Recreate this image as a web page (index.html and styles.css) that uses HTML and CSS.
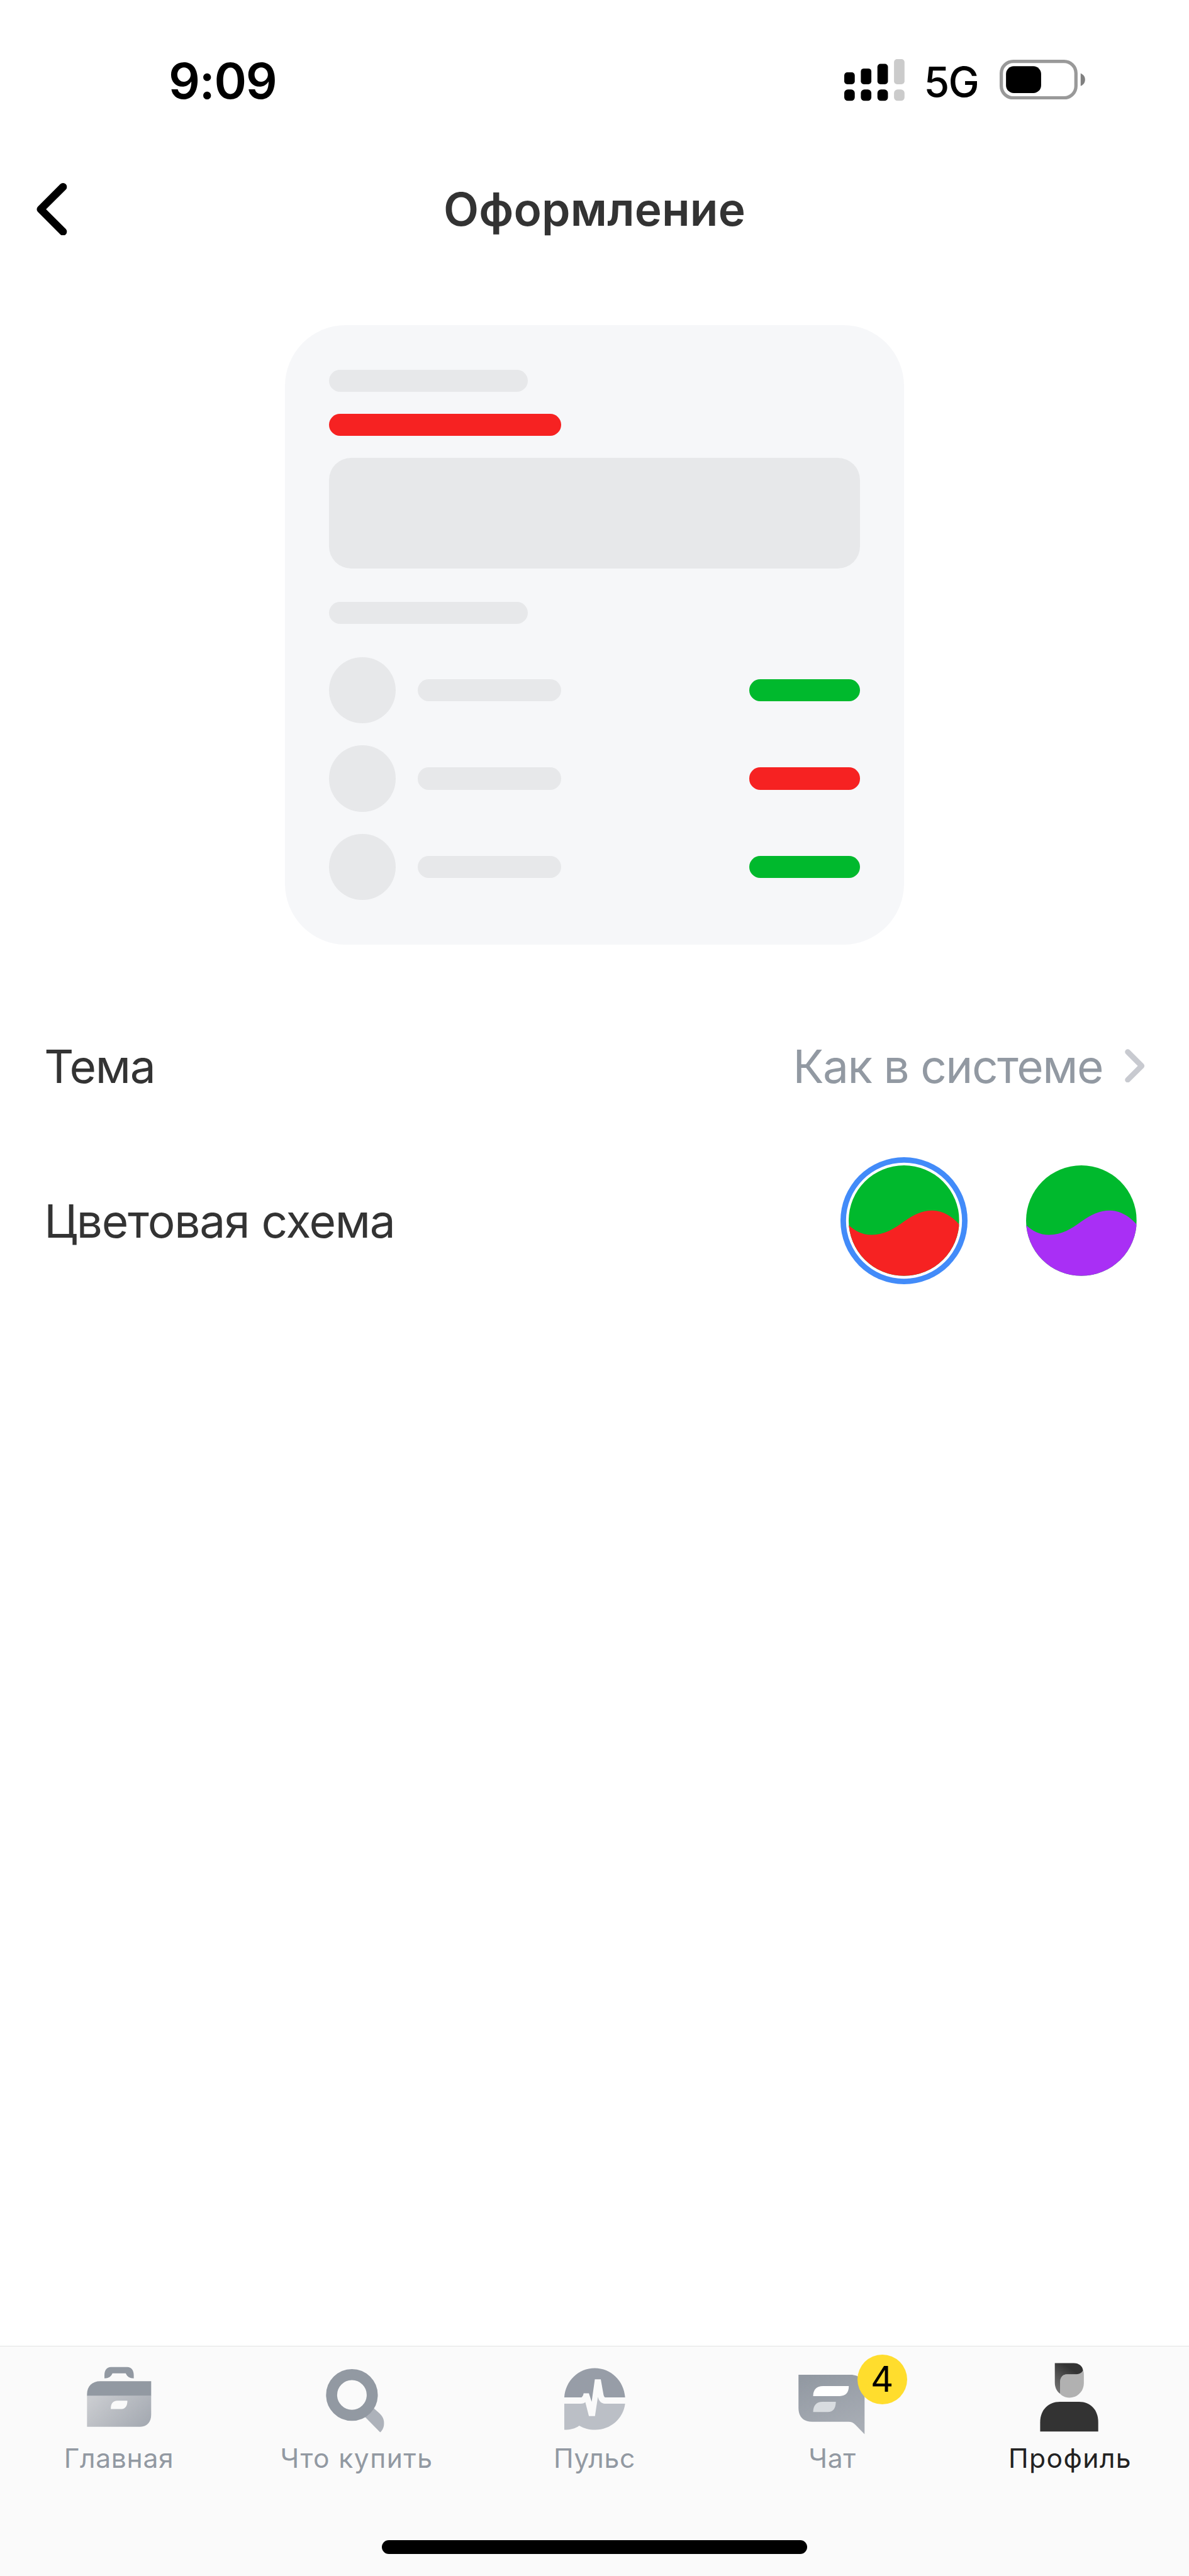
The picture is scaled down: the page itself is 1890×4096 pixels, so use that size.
FILE: index.html
```html
<!DOCTYPE html>
<html lang="ru">
<head>
    <meta charset="UTF-8">
    <meta name="viewport" content="width=device-width, initial-scale=1.0">
    <title>Оформление</title>
    <link rel="stylesheet" href="styles.css">
</head>
<body>
    <div class="screen">
        <div class="status-bar">
            <span class="time">9:09</span>
            <div class="status-icons">
                <svg class="signal" viewBox="0 0 21.8 15.3">
                    <rect x="0" y="4.8" width="3.8" height="4.3" rx="1.1"/>
                    <rect x="6" y="3.4" width="3.8" height="5.7" rx="1.1"/>
                    <rect x="12" y="1.7" width="3.8" height="7.4" rx="1.1"/>
                    <rect x="18" y="0" width="3.8" height="9.1" rx="1.1" fill="#cbcbcb"/>
                    <rect x="0" y="11" width="3.8" height="4.1" rx="1.3"/>
                    <rect x="6" y="11" width="3.8" height="4.1" rx="1.3"/>
                    <rect x="12" y="11" width="3.8" height="4.1" rx="1.3"/>
                    <rect x="18" y="11" width="3.8" height="4.1" rx="1.3" fill="#cbcbcb"/>
                </svg>
                <span class="network">5G</span>
                <svg class="battery" viewBox="0 0 31 14.4">
                    <rect x="0.6" y="0.6" width="27" height="13.2" rx="4.3" fill="none" stroke="#999" stroke-width="1.2"/>
                    <rect x="2.3" y="2.35" width="12.7" height="9.7" rx="2.8"/>
                    <path d="M29.3 4.9 C30.4 5.4 30.9 6.2 30.9 7.2 C30.9 8.2 30.4 9 29.3 9.5 Z" fill="#808080"/>
                </svg>
            </div>
        </div>

        <header class="nav-bar">
            <svg class="back" viewBox="0 0 11 19">
                <path d="M9.6 1.4 L1.5 9.5 L9.6 17.6" fill="none" stroke="#000" stroke-width="2.8" stroke-linecap="round" stroke-linejoin="round"/>
            </svg>
            <h1>Оформление</h1>
        </header>

        <main>
            <div class="preview">
                <div class="bar short"></div>
                <div class="bar long red"></div>
                <div class="box"></div>
                <div class="bar short"></div>
                <div class="list">
                    <div class="item"><i class="dot"></i><i class="bar name"></i><i class="bar value green"></i></div>
                    <div class="item"><i class="dot"></i><i class="bar name"></i><i class="bar value red"></i></div>
                    <div class="item"><i class="dot"></i><i class="bar name"></i><i class="bar value green"></i></div>
                </div>
            </div>

            <div class="row theme">
                <span class="label">Тема</span>
                <span class="current">Как в системе</span>
                <svg class="chevron" viewBox="0 0 7.2 12.2">
                    <path d="M1.05 1.05 L6.1 6.1 L1.05 11.15" fill="none" stroke="#c8cad0" stroke-width="2" stroke-linecap="round" stroke-linejoin="round"/>
                </svg>
            </div>

            <div class="row scheme">
                <span class="label">Цветовая схема</span>
                <div class="swatches">
                    <div class="swatch selected">
                        <svg viewBox="0 0 40 40">
                            <clipPath id="round"><circle cx="20" cy="20" r="20"/></clipPath>
                            <g clip-path="url(#round)">
                                <rect width="40" height="40" fill="#00b92d"/>
                                <path d="M0 21.6 C2.2 23.7 5 25.15 8.3 25.15 C13 25.15 16.4 22.9 20 20.3 C23.5 17.8 26.5 16.3 30.3 16.3 C34 16.3 37.6 18.5 40 21.4 V40 H0 Z" fill="#f62222"/>
                            </g>
                        </svg>
                    </div>
                    <div class="swatch">
                        <svg viewBox="0 0 40 40">
                            <g clip-path="url(#round)">
                                <rect width="40" height="40" fill="#00b92d"/>
                                <path d="M0 21.6 C2.2 23.7 5 25.15 8.3 25.15 C13 25.15 16.4 22.9 20 20.3 C23.5 17.8 26.5 16.3 30.3 16.3 C34 16.3 37.6 18.5 40 21.4 V40 H0 Z" fill="#a92ff5"/>
                            </g>
                        </svg>
                    </div>
                </div>
            </div>
        </main>

        <nav class="tab-bar">
            <div class="tabs">
                <div class="tab">
                    <svg viewBox="0 0 32 32">
                        <linearGradient id="case" x1="0" y1="0.2" x2="1" y2="0.7">
                            <stop offset="0" stop-color="#caccd0"/>
                            <stop offset="1" stop-color="#a6abb3"/>
                        </linearGradient>
                        <path d="M10.7 9.5 V8.3 C10.7 6.5 11.6 5.4 13 5.4 H19 C20.4 5.4 21.3 6.5 21.3 8.3 V9.5 C19.8 9.5 18.9 8.9 18.4 7.7 H13.6 C13.1 8.9 12.2 9.5 10.7 9.5 Z" fill="#9299a2"/>
                        <path d="M4.4 15.85 V15.2 C4.4 12.3 6.3 10.5 9.2 10.5 H27.6 V15.85 Z" fill="#9299a2"/>
                        <path fill-rule="evenodd" d="M4.4 15.8 H27.6 V22.6 C27.6 25.3 26.2 27 23.7 27 H4.4 Z M13 20.6 H16.9 C18.3 20.6 19 19.4 19 17.6 H15.4 C13.7 17.6 13 18.7 13 20.6 Z" fill="url(#case)"/>
                    </svg>
                    <span>Главная</span>
                </div>
                <div class="tab">
                    <svg viewBox="0 0 32 32">
                        <path d="M22.1 20.3 L24.2 22.2 C25.4 23.4 25.8 24.4 25.8 25.8 C25.8 27.2 25.2 28.4 24.4 29 L18.8 23.3 Z" fill="#adb2ba"/>
                        <circle cx="14.2" cy="15.5" r="7.35" fill="#fafafa" stroke="#9299a2" stroke-width="4"/>
                    </svg>
                    <span class="wide">Что купить</span>
                </div>
                <div class="tab">
                    <svg viewBox="0 0 32 32">
                        <path d="M5 16.4 C5.4 10.4 10.1 5.8 16 5.8 C21.9 5.8 26.6 10.4 27 16.4 H19.7 C19.3 16 19.2 15.6 19.1 14.9 L18.2 9.85 H16.05 L14.9 18 L13.9 14.9 H12 C11.9 15.6 11.6 16.1 11.2 16.4 Z" fill="#979da7"/>
                        <path d="M5 18.67 H11 C11.7 18.67 12.1 18.5 12.6 18.1 L13.9 23.15 H16.1 L17.15 16.2 C17.6 17.8 18.3 18.5 19.7 18.67 H27 C26.3 24.1 21.8 28.1 16.2 28.1 C14 28.1 12.2 27.6 10.4 26.6 C8.9 27.7 7.2 28.1 5 28.1 Z" fill="#bbbfc6"/>
                    </svg>
                    <span>Пульс</span>
                </div>
                <div class="tab">
                    <svg viewBox="0 0 32 32">
                        <linearGradient id="chat" x1="0.2" y1="0" x2="0.6" y2="1">
                            <stop offset="0" stop-color="#9299a2"/>
                            <stop offset="1" stop-color="#a8adb5"/>
                        </linearGradient>
                        <path d="M3.7 8.2 H22.5 C25.7 8.2 27.6 10.2 27.6 13.2 V29.7 L24.2 26.2 C23.5 25.5 22.8 25.2 21.8 25.2 H8.6 C5.5 25.2 3.7 23.4 3.7 20.2 Z" fill="url(#chat)"/>
                        <path d="M9 15.9 C9 13.5 10.3 12.3 12.6 12.3 H21.9 C21.9 14.6 20.8 15.9 18.6 15.9 Z" fill="#fff"/>
                        <path d="M9 21.7 C9 19.3 10.2 18 12.4 18 H17.2 C17.2 20.3 16.3 21.7 14.2 21.7 Z" fill="#d8dce0"/>
                    </svg>
                    <span>Чат</span>
                    <b class="badge">4</b>
                </div>
                <div class="tab active">
                    <svg viewBox="0 0 32 32">
                        <linearGradient id="hair" x1="0.6" y1="0.2" x2="0.1" y2="1">
                            <stop offset="0" stop-color="#333"/>
                            <stop offset="1" stop-color="#777"/>
                        </linearGradient>
                        <path d="M12.3 15.1 V11 C12.3 9.2 13.2 8 14.8 8 H18.2 C19.4 8 20.1 7.5 20.6 6.5 C20.8 6.9 20.9 7.4 20.9 8 V11.2 C20.9 14.2 18.6 16.5 15.6 16.5 C14.3 16.5 13.1 16 12.3 15.1 Z" fill="#b1b1b1"/>
                        <path d="M10.4 4 H17.2 C19.2 4 20.4 5.1 20.6 6.6 C20.1 7.5 19.4 8 18.2 8 H14.8 C13.2 8 12.3 9.2 12.3 11 V15.1 C11 14.1 10.4 12.7 10.4 11 Z" fill="url(#hair)"/>
                        <path d="M5.1 28.7 V25.4 C5.1 20.8 8.2 18 12.2 18 H19.2 C23.2 18 26.1 20.8 26.1 25.4 V28.7 Z" fill="#333"/>
                    </svg>
                    <span class="wide">Профиль</span>
                </div>
            </div>
            <div class="home-indicator"></div>
        </nav>
    </div>
</body>
</html>
```
FILE: styles.css
```css
* {
    box-sizing: border-box;
}
/* 1rem = 1pt of a 430pt wide screen */
html {
    font-size: calc(100vw / 430);
}
body {
    margin: 0;
    font-family: Inter, "Liberation Sans", sans-serif;
    font-size: 16.6rem;
    color: #333333;
    background-color: #ffffff;
}
svg {
    display: block;
    flex: none;
}
.screen {
    display: flex;
    flex-direction: column;
    height: 100vh;
    overflow: hidden;
}

/* status bar */
.status-bar {
    display: flex;
    justify-content: space-between;
    height: 59rem;
    padding: 21.3rem 37.6rem 0 61rem;
    color: #000000;
}
.time {
    height: 16rem;
    line-height: 16rem;
    font-size: 17.8rem;
    font-weight: 600;
    letter-spacing: -0.3rem;
}
.status-icons {
    display: flex;
    align-items: flex-start;
}
.signal {
    width: 21.8rem;
    height: 15.3rem;
}
.network {
    width: 34.3rem;
    padding-left: 7rem;
    margin-top: 0.4rem;
    line-height: 16rem;
    font-size: 15rem;
    font-weight: 500;
    letter-spacing: -0.4rem;
}
.battery {
    width: 31rem;
    height: 14.4rem;
    margin-top: 0.3rem;
}

/* navigation bar */
.nav-bar {
    display: flex;
    align-items: center;
    height: 33.2rem;
    padding: 0 13.3rem;
}
.back {
    width: 11rem;
    height: 19rem;
}
h1 {
    flex: 1;
    margin: 0 11rem 0 0;
    text-align: center;
    font-size: 16.6rem;
    font-weight: 600;
    letter-spacing: 0.04rem;
}

/* preview card */
.preview {
    display: flex;
    flex-direction: column;
    width: 224rem;
    height: 224rem;
    margin: 25.5rem auto 0;
    padding: 16rem;
    background-color: #f6f7f9;
    border-radius: 22rem;
}
.bar {
    height: 8rem;
    border-radius: 4rem;
    background-color: #e7e8ea;
}
.short {
    width: 72rem;
}
.long {
    width: 84rem;
    margin: 8rem 0;
}
.box {
    height: 40rem;
    margin-bottom: 12rem;
    border-radius: 8rem;
    background-color: #e7e8ea;
}
.list {
    display: flex;
    flex-direction: column;
    gap: 8rem;
    margin-top: 12rem;
}
.item {
    display: flex;
    align-items: center;
    gap: 8rem;
}
.dot {
    width: 24rem;
    height: 24rem;
    border-radius: 50%;
    background-color: #e7e8ea;
}
.name {
    width: 52rem;
}
.value {
    width: 40rem;
    margin-left: auto;
}
.red {
    background-color: #f62222;
}
.green {
    background-color: #00b92d;
}

/* settings rows */
.row {
    display: flex;
    align-items: center;
    justify-content: space-between;
    height: 56rem;
    padding: 0 16rem;
}
.theme {
    margin-top: 16rem;
}
.label {
    letter-spacing: -0.27rem;
}
.current {
    margin-left: auto;
    margin-right: 8rem;
    color: #9299a2;
    letter-spacing: -0.35rem;
}
.chevron {
    width: 7.2rem;
    height: 12.2rem;
    margin-bottom: 0.4rem;
}
.swatches {
    display: flex;
    gap: 18rem;
}
.swatch {
    padding: 3rem;
    border-radius: 50%;
}
.swatch svg {
    width: 40rem;
    height: 40rem;
}
.selected {
    box-shadow: inset 0 0 0 2rem #428bf9;
}

/* tab bar */
.tab-bar {
    height: 83.3rem;
    margin-top: auto;
    border-top: 0.35rem solid #e2e3e4;
    background-color: #fafafa;
}
.tabs {
    display: flex;
}
.tab {
    position: relative;
    display: flex;
    flex-direction: column;
    align-items: center;
    width: 86rem;
    padding-top: 2rem;
    font-size: 9.7rem;
    letter-spacing: 0.15rem;
    color: #9299a2;
}
.tab svg {
    width: 32rem;
    height: 32rem;
}
.tab span {
    line-height: 12rem;
    margin-top: 0.7rem;
}
.tab .wide {
    letter-spacing: 0.32rem;
}
.active {
    color: #222222;
}
.badge {
    position: absolute;
    top: 3rem;
    left: 52rem;
    width: 18rem;
    height: 18rem;
    border-radius: 50%;
    background-color: #ffdd2d;
    color: #000000;
    font-size: 12.8rem;
    font-weight: 400;
    line-height: 17.8rem;
    letter-spacing: 0;
    text-align: center;
}
.home-indicator {
    width: 154rem;
    height: 5rem;
    margin: 23.5rem auto 0;
    border-radius: 2.5rem;
    background-color: #000000;
}
```
